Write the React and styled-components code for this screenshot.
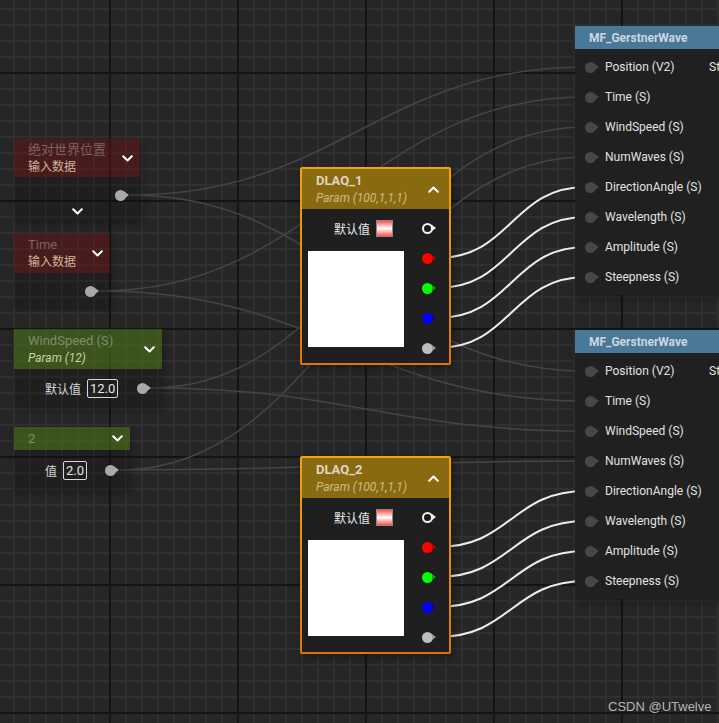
import React from "react";
import styled, { createGlobalStyle } from "styled-components";

const Global = createGlobalStyle`
  html, body { margin: 0; padding: 0; background: #262626; }
  body { font-family: Roboto, "Noto Sans CJK SC", sans-serif; overflow: hidden; }
  * { box-sizing: border-box; }
`;

const Canvas = styled.div`
  position: relative;
  width: 719px;
  height: 723px;
  overflow: hidden;
  background-color: #262626;
  background-image:
    linear-gradient(to right, #141414 2px, transparent 2px),
    linear-gradient(to bottom, #141414 2px, transparent 2px),
    linear-gradient(to right, #303030 2px, transparent 2px),
    linear-gradient(to bottom, #303030 2px, transparent 2px);
  background-size: 128px 128px, 128px 128px, 16px 16px, 16px 16px;
  background-position: 109px 0, 0 72px, 13px 0, 0 8px;
  font-family: Roboto, "Noto Sans CJK SC", sans-serif;
`;

const WireLayer = styled.svg`
  position: absolute;
  inset: 0;
  width: 719px;
  height: 723px;
`;

const NodeFrame = styled.div`
  position: absolute;
  left: ${(p) => p.$x}px;
  top: ${(p) => p.$y}px;
  width: ${(p) => p.$w}px;
  display: flex;
  flex-direction: column;
  box-shadow: 2px 3px 6px rgba(0, 0, 0, 0.25);
`;

const tones = {
  red: "rgba(110, 16, 16, 0.45)",
  green: "rgba(72, 112, 22, 0.62)",
};

const ParamHeader = styled.div`
  height: ${(p) => p.$h}px;
  background: ${(p) => tones[p.$tone]};
  display: flex;
  align-items: center;
  justify-content: space-between;
  padding: 0 7px 0 14px;
`;

const HeaderText = styled.div`
  display: flex;
  flex-direction: column;
  gap: 2px;
`;

const DimTitle = styled.span`
  font-size: 13px;
  line-height: 16px;
  color: ${(p) => p.$color};
  white-space: nowrap;
`;

const SubTitle = styled.span`
  font-size: 12px;
  line-height: 15px;
  color: ${(p) => p.$color};
  font-style: ${(p) => (p.$italic ? "italic" : "normal")};
  white-space: nowrap;
`;

const ChevronBox = styled.span`
  display: inline-flex;
  width: 12px;
  height: 12px;
  align-items: center;
  justify-content: center;
`;

const ParamBody = styled.div`
  background: rgba(18, 18, 18, 0.32);
  display: flex;
  flex-direction: column;
  padding: ${(p) => p.$pad};
`;

const PinRow = styled.div`
  height: ${(p) => p.$h || 16}px;
  display: flex;
  align-items: center;
  justify-content: ${(p) => p.$justify || "flex-end"};
  gap: 6px;
  padding-right: ${(p) => p.$pr || 10}px;
  padding-left: ${(p) => p.$pl || 0}px;
`;

const AdvancedRow = styled.div`
  height: 16px;
  display: flex;
  align-items: center;
  justify-content: center;
`;

const Label = styled.span`
  font-size: 12px;
  color: ${(p) => p.$color || "#d6d6d6"};
  font-family: Roboto, "Noto Sans CJK SC", sans-serif;
  white-space: nowrap;
`;

const ValueBox = styled.span`
  border: 1px solid #d8d8d8;
  border-radius: 2px;
  height: 19px;
  padding: 0 2px;
  display: inline-flex;
  align-items: center;
  font-size: 13px;
  color: #e6e6e6;
`;

const Pin = styled.span`
  position: relative;
  display: inline-block;
  flex: none;
  width: 11px;
  height: 11px;
  border-radius: 50%;
  margin-right: 4px;
  background: ${(p) => (p.$ring ? "#1a1a1a" : p.$color)};
  border: ${(p) => (p.$ring ? `2px solid ${p.$color}` : "none")};
  &::after {
    content: "";
    position: absolute;
    top: 50%;
    left: ${(p) => (p.$ring ? "calc(100% + 1px)" : "calc(100% - 1px)")};
    transform: translateY(-50%);
    border-left: 4px solid ${(p) => p.$arrow || p.$color};
    border-top: 3px solid transparent;
    border-bottom: 3px solid transparent;
  }
`;

/* Vector parameter node */
const VectorFrame = styled.div`
  position: absolute;
  left: ${(p) => p.$x}px;
  top: ${(p) => p.$y}px;
  width: 151px;
  padding: 2px;
  border-radius: 2px;
  background: linear-gradient(to bottom, #f2a600, #dc7600);
  box-shadow: 2px 3px 8px rgba(0, 0, 0, 0.35);
  display: flex;
  flex-direction: column;
`;

const VectorHeader = styled.div`
  height: 40px;
  background: #8a6a10;
  display: flex;
  align-items: center;
  justify-content: space-between;
  padding: 0 10px 0 14px;
`;

const BoldTitle = styled.span`
  font-size: ${(p) => p.$size || 13}px;
  font-weight: 700;
  line-height: 16px;
  color: ${(p) => p.$color};
  white-space: nowrap;
`;

const VectorBody = styled.div`
  background: #1f1f1f;
  display: flex;
  justify-content: space-between;
  padding: 4px 12px 0 6px;
`;

const VectorLeft = styled.div`
  display: flex;
  flex-direction: column;
`;

const DefaultRow = styled.div`
  height: 30px;
  display: flex;
  align-items: center;
  gap: 6px;
  padding-left: 26px;
`;

const Swatch = styled.span`
  width: 17px;
  height: 17px;
  border: 1px solid #8a8a8a;
  background: linear-gradient(to bottom, #ff5050, #ffffff 50%, #ff5050);
`;

const Preview = styled.div`
  width: 96px;
  height: 96px;
  margin-top: 8px;
  background: #ffffff;
`;

const PinColumn = styled.div`
  display: flex;
  flex-direction: column;
`;

const PinCell = styled.div`
  height: 30px;
  display: flex;
  align-items: center;
`;

/* Material function node */
const FuncFrame = styled.div`
  position: absolute;
  left: ${(p) => p.$x}px;
  top: ${(p) => p.$y}px;
  width: 170px;
  display: flex;
  flex-direction: column;
  box-shadow: 2px 3px 8px rgba(0, 0, 0, 0.35);
`;

const FuncHeader = styled.div`
  height: 23px;
  background: #4a7898;
  display: flex;
  align-items: center;
  padding-left: 14px;
`;

const FuncBody = styled.div`
  background: #202020;
  padding: 3px 0 3px 0;
  display: flex;
  flex-direction: column;
`;

const FuncRow = styled.div`
  height: 30px;
  display: grid;
  grid-template-columns: 134px 1fr;
  align-items: center;
`;

const InputCell = styled.div`
  display: flex;
  align-items: center;
  padding-left: 10px;
`;

const InputLabel = styled.span`
  font-size: 12px;
  color: #e2e2e2;
  white-space: nowrap;
  margin-left: 5px;
`;

const OutputLabel = styled.span`
  font-size: 12px;
  color: #e2e2e2;
  white-space: nowrap;
`;

const Watermark = styled.span`
  position: absolute;
  left: 608px;
  top: 699px;
  font-family: "Liberation Sans", Arial, sans-serif;
  font-size: 13px;
  color: rgba(220, 220, 220, 0.8);
`;

const Chevron = ({ up }) => (
  <ChevronBox>
    <svg width="11" height="7" viewBox="0 0 11 7">
      <path
        d={up ? "M1.2 5.8 L5.5 1.5 L9.8 5.8" : "M1.2 1.2 L5.5 5.5 L9.8 1.2"}
        fill="none"
        stroke="#ffffff"
        strokeWidth="2"
        strokeLinecap="round"
        strokeLinejoin="round"
      />
    </svg>
  </ChevronBox>
);

const FuncInputs = ["Position (V2)", "Time (S)", "WindSpeed (S)", "NumWaves (S)", "DirectionAngle (S)", "Wavelength (S)", "Amplitude (S)", "Steepness (S)"];

const FuncNode = ({ x, y }) => (
  <FuncFrame $x={x} $y={y}>
    <FuncHeader>
      <BoldTitle $color="#cdd6de" $size={12}>MF_GerstnerWave</BoldTitle>
    </FuncHeader>
    <FuncBody>
      {FuncInputs.map((name, i) => (
        <FuncRow key={name}>
          <InputCell>
            <Pin $color="#474747" />
            <InputLabel>{name}</InputLabel>
          </InputCell>
          {i === 0 ? <OutputLabel>St</OutputLabel> : <span />}
        </FuncRow>
      ))}
    </FuncBody>
  </FuncFrame>
);

const VectorNode = ({ x, y, name }) => (
  <VectorFrame $x={x} $y={y}>
    <VectorHeader>
      <HeaderText>
        <BoldTitle $color="#dcd6c8">{name}</BoldTitle>
        <SubTitle $color="#cbbd84" $italic>Param (100,1,1,1)</SubTitle>
      </HeaderText>
      <Chevron up />
    </VectorHeader>
    <VectorBody>
      <VectorLeft>
        <DefaultRow>
          <Label $color="#e8e8e8">默认值</Label>
          <Swatch />
        </DefaultRow>
        <Preview />
      </VectorLeft>
      <PinColumn>
        <PinCell><Pin $ring $color="#f2f2f2" /></PinCell>
        <PinCell><Pin $color="#ff0000" $arrow="#c00000" /></PinCell>
        <PinCell><Pin $color="#00ff00" $arrow="#00b000" /></PinCell>
        <PinCell><Pin $color="#0000ff" $arrow="#0000b0" /></PinCell>
        <PinCell><Pin $color="#bdbdbd" $arrow="#9a9a9a" /></PinCell>
      </PinColumn>
    </VectorBody>
  </VectorFrame>
);

const wire = (x1, y1, x2, y2, k = 0.5) => {
  const t = Math.max(Math.abs(x2 - x1) * k, 30);
  return `M${x1} ${y1} C${x1 + t} ${y1}, ${x2 - t} ${y2}, ${x2} ${y2}`;
};

const leftPins = [
  [130, 195],
  [100, 291],
  [151, 388],
  [120, 470],
];

export default function App() {
  const faint = [];
  leftPins.forEach(([x, y], i) => {
    faint.push(wire(x, y, 586, 67 + 30 * i, 0.45));
    faint.push(wire(x, y, 586, 371 + 30 * i, 0.45));
  });
  const bright = [];
  for (let i = 0; i < 4; i++) {
    bright.push(wire(437, 258 + 30 * i, 586, 187 + 30 * i, 0.5));
    bright.push(wire(437, 547 + 30 * i, 586, 491 + 30 * i, 0.5));
  }
  return (
    <>
      <Global />
      <Canvas>
        <WireLayer viewBox="0 0 719 723">
          {faint.map((d, i) => (
            <path key={"f" + i} d={d} fill="none" stroke="#454545" strokeWidth="1.5" />
          ))}
          {bright.map((d, i) => (
            <path key={"b" + i} d={d} fill="none" stroke="#ececec" strokeWidth="2" />
          ))}
        </WireLayer>

        <NodeFrame $x={14} $y={139} $w={126}>
          <ParamHeader $tone="red" $h={38}>
            <HeaderText>
              <DimTitle $color="#7c6262">绝对世界位置</DimTitle>
              <SubTitle $color="#d0b29a">输入数据</SubTitle>
            </HeaderText>
            <Chevron />
          </ParamHeader>
          <ParamBody $pad="10px 0 3px 0">
            <PinRow>
              <Pin $color="#a9a9a9" />
            </PinRow>
            <AdvancedRow>
              <Chevron />
            </AdvancedRow>
          </ParamBody>
        </NodeFrame>

        <NodeFrame $x={14} $y={233} $w={96}>
          <ParamHeader $tone="red" $h={40}>
            <HeaderText>
              <DimTitle $color="#7c6262">Time</DimTitle>
              <SubTitle $color="#d0b29a">输入数据</SubTitle>
            </HeaderText>
            <Chevron />
          </ParamHeader>
          <ParamBody $pad="10px 0 8px 0">
            <PinRow>
              <Pin $color="#a9a9a9" />
            </PinRow>
          </ParamBody>
        </NodeFrame>

        <NodeFrame $x={14} $y={329} $w={148}>
          <ParamHeader $tone="green" $h={40}>
            <HeaderText>
              <DimTitle $color="#7f8c6c">WindSpeed (S)</DimTitle>
              <SubTitle $color="#cbd1a6" $italic>Param (12)</SubTitle>
            </HeaderText>
            <Chevron />
          </ParamHeader>
          <ParamBody $pad="6px 0 6px 0">
            <PinRow $h={26} $justify="flex-start" $pl={31}>
              <Label>默认值</Label>
              <ValueBox>12.0</ValueBox>
              <span style={{ flex: 1 }} />
              <Pin $color="#a9a9a9" />
            </PinRow>
          </ParamBody>
        </NodeFrame>

        <NodeFrame $x={14} $y={427} $w={116}>
          <ParamHeader $tone="green" $h={23}>
            <DimTitle $color="#7f8c6c">2</DimTitle>
            <Chevron />
          </ParamHeader>
          <ParamBody $pad="7px 0 8px 0">
            <PinRow $h={26} $justify="flex-start" $pl={31}>
              <Label>值</Label>
              <ValueBox>2.0</ValueBox>
              <span style={{ flex: 1 }} />
              <Pin $color="#a9a9a9" />
            </PinRow>
          </ParamBody>
        </NodeFrame>

        <VectorNode x={300} y={167} name="DLAQ_1" />
        <VectorNode x={300} y={456} name="DLAQ_2" />

        <FuncNode x={575} y={26} />
        <FuncNode x={575} y={330} />

        <Watermark>CSDN @UTwelve</Watermark>
      </Canvas>
    </>
  );
}
